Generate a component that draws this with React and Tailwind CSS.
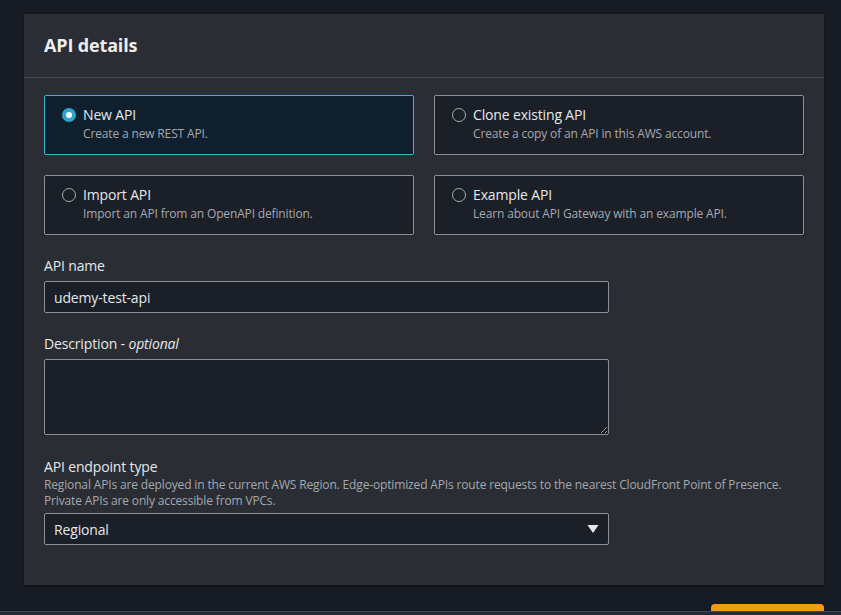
import { useState } from "react";

const options = [
  { id: "new", title: "New API", desc: "Create a new REST API." },
  { id: "clone", title: "Clone existing API", desc: "Create a copy of an API in this AWS account." },
  { id: "import", title: "Import API", desc: "Import an API from an OpenAPI definition." },
  { id: "example", title: "Example API", desc: "Learn about API Gateway with an example API." },
];

function RadioTile({ option, checked, onSelect }) {
  return (
    <button
      onClick={onSelect}
      className={`flex items-start gap-[7px] h-[60px] px-[17px] pt-[9px] text-left border rounded-[2px] ${
        checked ? "bg-[#0f1f2e] border-[#3fb5d3]" : "bg-[#1b1f27] border-[#8b9098]"
      }`}
    >
      <span
        className={`mt-[3px] w-[14px] h-[14px] rounded-full flex items-center justify-center shrink-0 ${
          checked ? "bg-[#2aa7c9]" : "border border-[#a7acb3]"
        }`}
      >
        {checked && <span className="w-[6px] h-[6px] rounded-full bg-white" />}
      </span>
      <span className="flex flex-col">
        <span className="text-[14px] leading-[20px] text-[#e6e8ea]">{option.title}</span>
        <span className="text-[12px] leading-[18px] text-[#a4a9b0]">{option.desc}</span>
      </span>
    </button>
  );
}

export default function App() {
  const [selected, setSelected] = useState("new");
  const [name, setName] = useState("udemy-test-api");

  return (
    <div
      className="w-[841px] h-[615px] bg-[#171b23] flex flex-col overflow-hidden tracking-[-0.15px]"
      style={{ fontFamily: '"Open Sans", "Noto Sans", sans-serif' }}
    >
      <div className="pl-[24px] pt-[14px]">
        <div className="w-[800px] bg-[#2a2d33] shadow-[0_1px_2px_rgba(0,0,0,0.6)]">
          {/* Header */}
          <div className="h-[64px] px-[20px] flex items-center border-b border-[#434851]">
            <h2 className="text-[18px] font-bold text-[#eceef0]">API details</h2>
          </div>

          {/* Body */}
          <div className="px-[20px] pt-[17px] pb-[40px]">
            <div className="grid grid-cols-2 gap-x-[20px] gap-y-[20px] w-[760px]">
              {options.map((o) => (
                <RadioTile
                  key={o.id}
                  option={o}
                  checked={selected === o.id}
                  onSelect={() => setSelected(o.id)}
                />
              ))}
            </div>

            <div className="mt-[21px]">
              <label className="block text-[14px] leading-[20px] text-[#e6e8ea] mb-[5px]">API name</label>
              <input
                value={name}
                onChange={(e) => setName(e.target.value)}
                className="w-[565px] h-[32px] px-[9px] bg-[#1b1f27] border border-[#8b9098] rounded-[2px] text-[14px] text-[#e6e8ea] outline-none"
              />
            </div>

            <div className="mt-[21px]">
              <label className="block text-[14px] leading-[20px] text-[#e6e8ea] mb-[5px]">
                Description - <i>optional</i>
              </label>
              <textarea className="block w-[565px] h-[76px] px-[9px] py-[6px] bg-[#1b1f27] border border-[#8b9098] rounded-[2px] text-[14px] text-[#e6e8ea] outline-none" />
            </div>

            <div className="mt-[22px]">
              <label className="block text-[14px] leading-[20px] text-[#e6e8ea]">API endpoint type</label>
              <p className="text-[12px] leading-[16px] text-[#a4a9b0] mb-[4px]">
                Regional APIs are deployed in the current AWS Region. Edge-optimized APIs route requests to the nearest
                CloudFront Point of Presence. Private APIs are only accessible from VPCs.
              </p>
              <div className="w-[565px] h-[32px] px-[9px] flex items-center justify-between bg-[#1b1f27] border border-[#8b9098] rounded-[2px]">
                <span className="text-[14px] text-[#e6e8ea]">Regional</span>
                <svg width="12" height="10" viewBox="0 0 12 10">
                  <path d="M0.5 1 H11.5 L6 9 Z" fill="#e6e8ea" />
                </svg>
              </div>
            </div>
          </div>
        </div>
      </div>

      {/* Footer strip */}
      <div className="flex justify-end pr-[17px] mt-[19px]">
        <div className="w-[113px] h-[7px] bg-[#f29b1b] rounded-t-[4px]" />
      </div>
      <div className="flex-1 bg-[#232b37] border-t border-[#3e4756]" />
    </div>
  );
}
